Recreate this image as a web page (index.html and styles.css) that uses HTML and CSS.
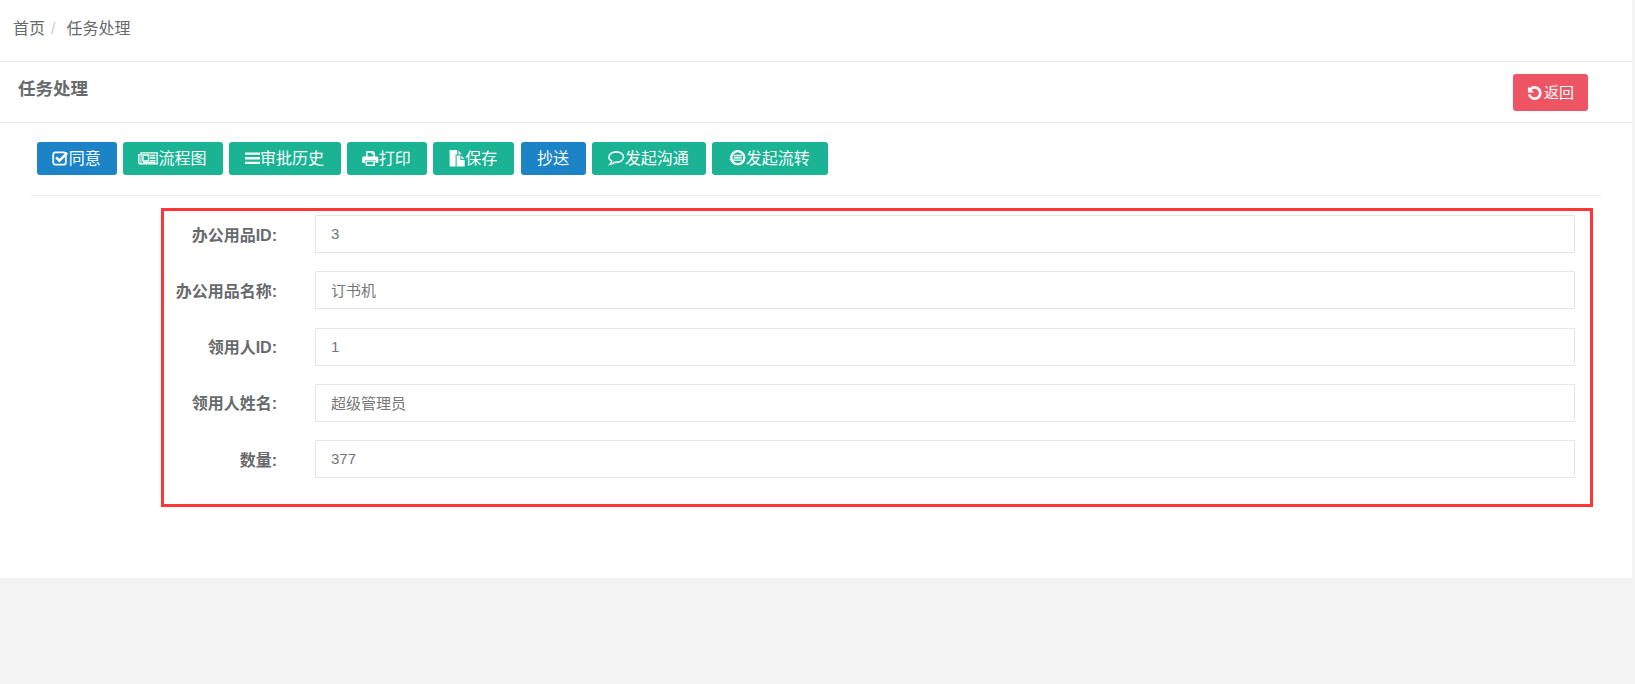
FILE: index.html
```html
<!DOCTYPE html>
<html lang="zh-CN">
<head>
<meta charset="utf-8">
<title>任务处理</title>
<link rel="stylesheet" href="styles.css">
</head>
<body>
<div class="page">
  <nav class="crumbs"><span>首页</span><span class="sep">/</span><span>任务处理</span></nav>
  <header class="title-row">
    <h5>任务处理</h5>
    <button class="btn btn-danger back">
      <svg class="ico ico-back" viewBox="0 0 16 16"><path d="M3.6 4.6A6 6 0 1 1 2.3 10" fill="none" stroke="currentColor" stroke-width="2.8"/><path d="M1 1.600l0 6.400 6.400 0z" fill="currentColor"/></svg>
      <span class="back-text">返回</span>
    </button>
  </header>
  <section class="content">
    <div class="toolbar">
      <button class="btn btn-blue"><svg class="ico" viewBox="0 0 16 16"><rect x="1.2" y="2.200" width="12.200" height="12" rx="2.200" fill="none" stroke="currentColor" stroke-width="1.700"/><path d="M4 7.200l3.200 3.200L14.800 2.800" fill="none" stroke="currentColor" stroke-width="2.500"/></svg>同意</button>
      <button class="btn btn-green"><svg class="ico ico-wide" viewBox="0 0 20 16"><path d="M3 2.600h16.200v11H2a1.200 1.200 0 0 1-1.200-1.200V4.400H3z" fill="none" stroke="currentColor" stroke-width="1.400"/><path d="M3 4v9.600" stroke="currentColor" stroke-width="1"/><path d="M5 4.800h5.600v5.800H5zM12 5.200h5.400M12 7.800h5.400M12 10.400h5.400M5 12.200h12.400" fill="none" stroke="currentColor" stroke-width="1.400"/></svg>流程图</button>
      <button class="btn btn-green"><svg class="ico ico-wider" viewBox="0 0 16 16"><path d="M0 3h16M0 8h16M0 13h16" fill="none" stroke="currentColor" stroke-width="2.500"/></svg>审批历史</button>
      <button class="btn btn-green"><svg class="ico" viewBox="0 0 16 16"><path d="M4 1h6.800L12.600 2.800V7H11V4.200H9.400V2.600H5.400V7H4z" fill="currentColor"/><path d="M1.600 6.200h12.800a1.400 1.400 0 0 1 1.400 1.400v4.800h-2.800V9.600H3v2.800H.2V7.600a1.400 1.400 0 0 1 1.400-1.400z" fill="currentColor"/><path d="M4.200 10.800h7.600v4H4.200z" fill="none" stroke="currentColor" stroke-width="1.400"/></svg>打印</button>
      <button class="btn btn-green"><svg class="ico" viewBox="0 0 16 16"><path d="M.6 0h7.400v4.400H6.400V16H.6z" fill="currentColor"/><path d="M7.400 5.400h3.600v4.200h4.200V16H7.400z" fill="currentColor"/><path d="M9.200 .4v3.600h3.200z" fill="currentColor"/><path d="M12 5.600l3 3h-3z" fill="currentColor"/></svg>保存</button>
      <button class="btn btn-blue">抄送</button>
      <button class="btn btn-green"><svg class="ico" viewBox="0 0 16 16"><path d="M8 1.800c3.900 0 7.100 2.200 7.100 5.100S11.900 12 8 12c-.6 0-1.200 0-1.800-.1-1 1-2.500 1.700-4.200 2 .9-.9 1.500-1.900 1.600-3.100C1.900 9.900.9 8.500.9 6.900.9 4 4.100 1.800 8 1.800z" fill="none" stroke="currentColor" stroke-width="1.500"/></svg>发起沟通</button>
      <button class="btn btn-green"><svg class="ico" viewBox="0 0 16 16"><circle cx="8.500" cy="7.500" r="6.300" fill="none" stroke="currentColor" stroke-width="2.200"/><path d="M4.600 5.400h7.800M4.600 7.600h7.800M4.600 9.800h7.800" fill="none" stroke="currentColor" stroke-width="1.400"/><path d="M0 8.800h4.500v3.200z" fill="currentColor"/></svg>发起流转</button>
    </div>
    <hr class="divider">
    <form class="task-form">
      <div class="row"><label>办公用品ID:</label><input value="3" readonly></div>
      <div class="row"><label>办公用品名称:</label><input value="订书机" readonly></div>
      <div class="row"><label>领用人ID:</label><input value="1" readonly></div>
      <div class="row"><label>领用人姓名:</label><input value="超级管理员" readonly></div>
      <div class="row"><label>数量:</label><input value="377" readonly></div>
    </form>
  </section>
</div>
</body>
</html>
```

FILE: styles.css
```css
* { box-sizing: border-box; }
html, body { margin: 0; height: 100%; overflow: hidden; }
body {
  background: #f3f3f3;
  color: #676a6c;
  font-family: "Liberation Sans", "Noto Sans CJK SC", sans-serif;
  font-size: 16px;
}
.page { width: 1632px; height: 578px; background: #fff; }
.crumbs {
  height: 62px;
  padding: 0 13px 3px;
  display: flex;
  align-items: center;
  border-bottom: 1px solid #e7eaec;
  line-height: 1;
  color: #676a6c;
}
.crumbs .sep { color: #ccc; padding: 0 11px 0 6px; }
.title-row {
  height: 61px;
  padding: 12px 44px 0 18px;
  display: flex;
  justify-content: space-between;
  align-items: flex-start;
  border-bottom: 1px solid #e7eaec;
}
.title-row h5 {
  margin: 0;
  padding-top: 3px;
  font-size: 17.500px;
  line-height: 24px;
  font-weight: 700;
}
.btn {
  display: flex;
  align-items: center;
  justify-content: center;
  height: 33px;
  padding: 0;
  border: 0;
  border-radius: 3px;
  color: #fff;
  font-family: inherit;
  font-size: 16px;
  line-height: 1;
}
.btn-blue { background: #1c84c6; }
.btn-green { background: #1ab394; }
.btn-danger { background: #ed5565; }
.back { width: 75px; height: 37px; font-size: 15px; }
.back-text { margin-left: 2px; }
.ico { width: 16.500px; height: 16.500px; flex: none; }
.ico-back { width: 15px; height: 15px; }
.ico-wide { width: 20px; }
.ico-wider { width: 15px; }
.content { padding: 19px 31px 0; }
.toolbar { display: flex; gap: 6px; padding-left: 6px; }
.toolbar .btn { padding-right: 1px; }
.toolbar .btn:nth-child(1) { width: 80px; }
.toolbar .btn:nth-child(2) { width: 100px; }
.toolbar .btn:nth-child(3) { width: 112px; }
.toolbar .btn:nth-child(4) { width: 80px; }
.toolbar .btn:nth-child(5) { width: 81px; }
.toolbar .btn:nth-child(6) { width: 65px; margin-left: 1px; }
.toolbar .btn:nth-child(7) { width: 114px; }
.toolbar .btn:nth-child(8) { width: 116px; }
.divider { height: 1px; margin: 20px 0 0; border: 0; background: #e7eaec; }
.task-form {
  width: 1432px;
  height: 299px;
  margin: 12px 0 0 130px;
  padding: 4px 15px 0 0;
  border: 3px solid #ff3636;
  display: flex;
  flex-direction: column;
  gap: 18.300px;
}
.row { display: flex; align-items: center; }
.row label {
  width: 113px;
  flex: none;
  padding-bottom: 1px;
  text-align: right;
  font-size: 16px;
  font-weight: 700;
  white-space: nowrap;
}
.row input {
  flex: 1;
  height: 38px;
  margin-left: 38px;
  padding: 0 15px 1px;
  border: 1px solid #e5e6e7;
  border-radius: 1px;
  background: #fff;
  color: #777;
  font-family: inherit;
  font-size: 15px;
  outline: none;
}
```
